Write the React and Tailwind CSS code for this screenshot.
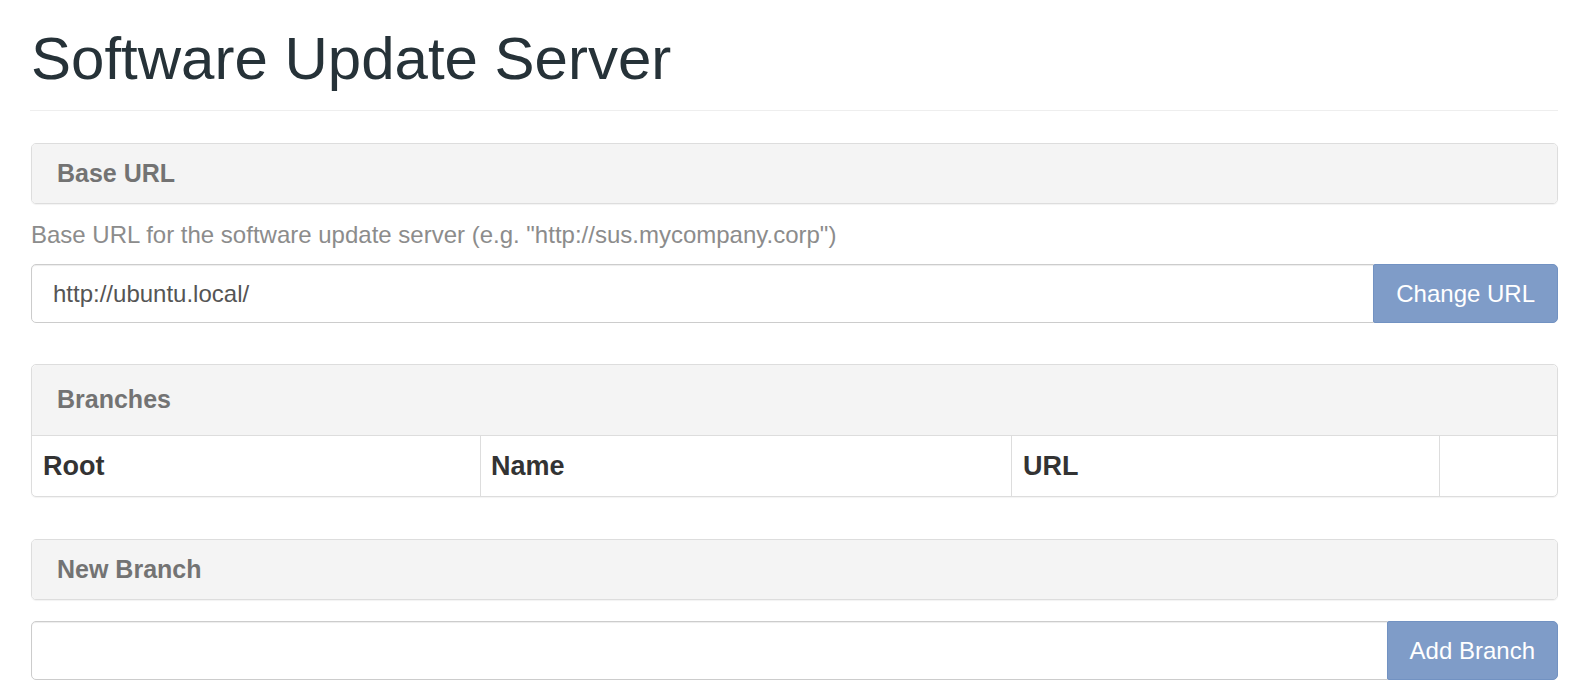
import React from "react";

const font = { fontFamily: '"Liberation Sans", Arial, Helvetica, sans-serif' };

const PanelHeading = ({ title, tall }) => (
  <div
    className={`flex items-center px-[25px] bg-[#f4f4f4] ${
      tall ? "h-[71px] border-b border-[#dddddd] rounded-t-[5px]" : "h-[59px]"
    }`}
  >
    <h3 className="text-[25px] font-bold text-[#737373]">{title}</h3>
  </div>
);

const InputGroup = ({ value, button, className }) => (
  <div className={`flex h-[59px] ${className || ""}`}>
    <input
      type="text"
      defaultValue={value}
      className="flex-1 min-w-0 h-full px-[21px] text-[24px] text-[#555555] bg-white border border-[#cccccc] rounded-l-[5px] shadow-[inset_0_1px_1px_rgba(0,0,0,0.075)] outline-none"
    />
    <button className="h-full px-[22px] text-[24px] text-white bg-[#7f9cc8] border border-[#7292c2] rounded-r-[5px] rounded-l-[2px] -ml-px">
      {button}
    </button>
  </div>
);

const App = () => {
  return (
    <div style={font} className="min-h-[700px] bg-white pl-[31px] pr-[22px] pt-[26px]">
      <h1 className="text-[60px] leading-[66px] text-[#263238] font-normal">
        Software Update Server
      </h1>
      <hr className="mt-[18px] -ml-px border-t border-[#eeeeee]" />

      {/* Base URL */}
      <section className="mt-[32px]">
        <div className="border border-[#dddddd] rounded-[5px] overflow-hidden shadow-[0_1px_1px_rgba(0,0,0,0.05)]">
          <PanelHeading title="Base URL" />
        </div>
        <p className="mt-[14px] mb-[12px] text-[24px] leading-[34px] text-[#8c8c8c]">
          Base URL for the software update server (e.g. "http://sus.mycompany.corp")
        </p>
        <InputGroup value="http://ubuntu.local/" button="Change URL" />
      </section>

      {/* Branches */}
      <section className="mt-[41px] border border-[#dddddd] rounded-[5px] shadow-[0_1px_1px_rgba(0,0,0,0.05)]">
        <PanelHeading title="Branches" tall />
        <div className="grid grid-cols-[448px_531px_428px_1fr] h-[60px] text-[27px] font-bold text-[#333333]">
          <div className="flex items-center px-[11px]">Root</div>
          <div className="flex items-center px-[10px] border-l border-[#dddddd]">Name</div>
          <div className="flex items-center px-[11px] border-l border-[#dddddd]">URL</div>
          <div className="border-l border-[#dddddd]"></div>
        </div>
      </section>

      {/* New Branch */}
      <section className="mt-[42px]">
        <div className="border border-[#dddddd] rounded-[5px] overflow-hidden shadow-[0_1px_1px_rgba(0,0,0,0.05)]">
          <PanelHeading title="New Branch" />
        </div>
        <InputGroup value="" button="Add Branch" className="mt-[21px]" />
      </section>
    </div>
  );
};

export default App;
